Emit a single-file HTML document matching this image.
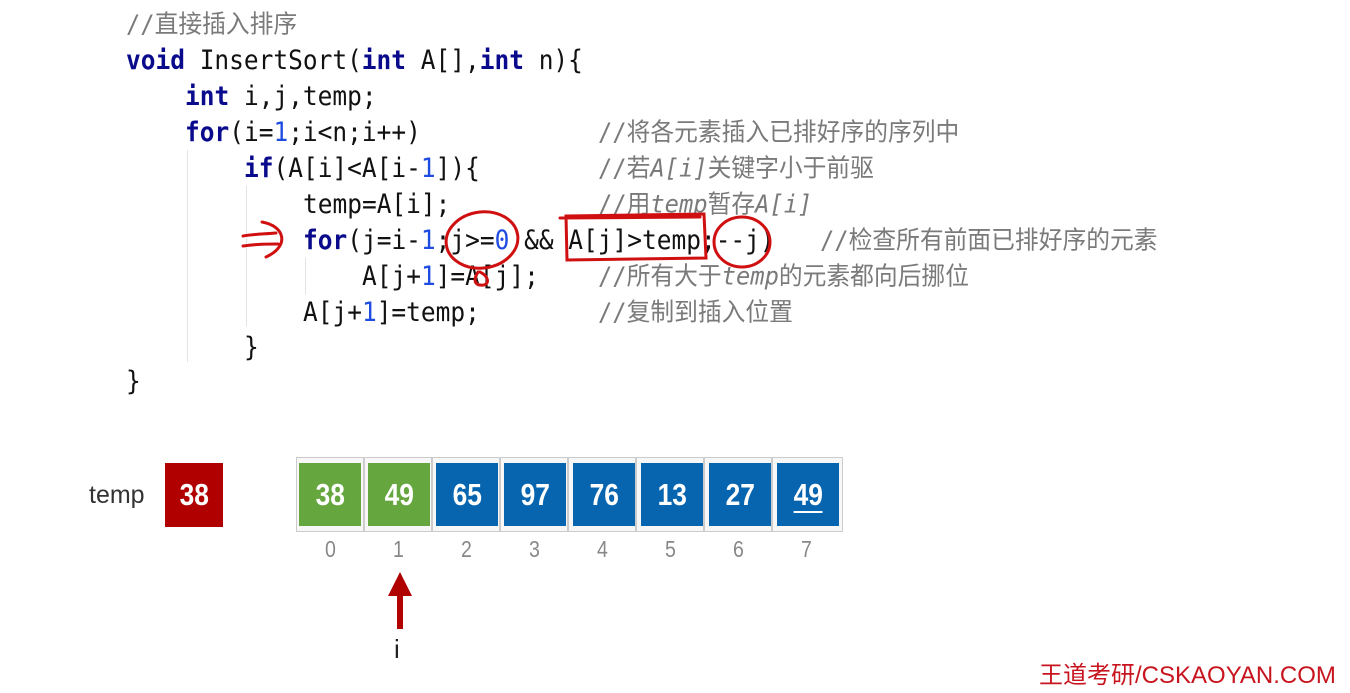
<!DOCTYPE html>
<html><head><meta charset="utf-8"><style>
body{margin:0;width:1350px;height:693px;background:#fff;position:relative;overflow:hidden;font-family:"DejaVu Sans Mono","Noto Sans CJK SC",monospace}
.l{position:absolute;font-size:24px;line-height:36px;white-space:pre;color:#111;transform:scale(1.02,1.1);transform-origin:left center}
.k{color:#0a0a8c;font-weight:bold}
.n{color:#1f4ce0}
.c{color:#7a7a7a;font-size:24px;transform:scale(0.99,1.05)}
.c i{font-style:italic}
.g{position:absolute;width:1px;background:#e4e4e4}
.cell{position:absolute;top:457px;width:68px;height:75px;border:1px solid #ccc;box-sizing:border-box;background:#f7f7f7}
.box{position:absolute;top:463px;width:62px;height:63px;color:#fff;font:bold 31px "Liberation Sans",sans-serif;text-align:center;line-height:63px}
.box span{display:inline-block;transform:scaleX(0.85)}
.idx{position:absolute;top:536px;width:68px;text-align:center;font:23px "Liberation Sans",sans-serif;color:#888}
.idx span{display:inline-block;transform:scaleX(0.85)}
</style></head><body>
<div class="g" style="left:187px;top:150px;height:212px"></div>
<div class="g" style="left:246px;top:186px;height:140px"></div>
<div class="g" style="left:305px;top:258px;height:36px"></div>

<div class="l c" style="left:126px;top:6px">//直接插入排序</div>
<div class="l" style="left:126px;top:42px"><span class="k">void</span> InsertSort(<span class="k">int</span> A[],<span class="k">int</span> n){</div>
<div class="l" style="left:185px;top:78px"><span class="k">int</span> i,j,temp;</div>
<div class="l" style="left:185px;top:114px"><span class="k">for</span>(i=<span class="n">1</span>;i&lt;n;i++)</div>
<div class="l" style="left:244px;top:150px"><span class="k">if</span>(A[i]&lt;A[i-<span class="n">1</span>]){</div>
<div class="l" style="left:303px;top:186px">temp=A[i];</div>
<div class="l" style="left:303px;top:222px"><span class="k">for</span>(j=i-<span class="n">1</span>;j&gt;=<span class="n">0</span> &amp;&amp; A[j]&gt;temp;--j)</div>
<div class="l" style="left:362px;top:258px">A[j+<span class="n">1</span>]=A[j];</div>
<div class="l" style="left:303px;top:294px">A[j+<span class="n">1</span>]=temp;</div>
<div class="l" style="left:244px;top:329px">}</div>
<div class="l" style="left:126px;top:363px">}</div>

<div class="l c" style="left:598px;top:114px">//将各元素插入已排好序的序列中</div>
<div class="l c" style="left:598px;top:150px">//若<i>A[i]</i>关键字小于前驱</div>
<div class="l c" style="left:598px;top:186px">//用<i>temp</i>暂存<i>A[i]</i></div>
<div class="l c" style="left:820px;top:222px">//检查所有前面已排好序的元素</div>
<div class="l c" style="left:598px;top:258px">//所有大于<i>temp</i>的元素都向后挪位</div>
<div class="l c" style="left:598px;top:294px">//复制到插入位置</div>

<svg style="position:absolute;left:0;top:0" width="1350" height="693" fill="none" stroke="#d01010" stroke-width="3" stroke-linecap="round">
<path d="M243 236 C255 234 265 234 276 233 M243 246 C258 244 266 244 278 244 M262 222 C285 226 290 246 266 257"/>
<ellipse cx="482" cy="240" rx="36" ry="28" transform="rotate(-8 482 240)"/>
<path d="M566 216 L704 214 L706 258 L567 260 Z M560 218 L700 217"/>
<ellipse cx="742" cy="242" rx="28" ry="25"/>
<path d="M478 272 C472 282 476 286 484 285 C490 283 488 276 480 272"/>
</svg>

<div style="position:absolute;left:89px;top:481px;font:25px 'Liberation Sans',sans-serif;color:#333">temp</div>
<div class="box" style="left:165px;background:#b00000;width:58px;height:64px"><span>38</span></div>

<div class="cell" style="left:296px"></div><div class="cell" style="left:364px"></div><div class="cell" style="left:432px"></div><div class="cell" style="left:500px"></div><div class="cell" style="left:568px"></div><div class="cell" style="left:636px"></div><div class="cell" style="left:704px"></div><div class="cell" style="left:772px;width:71px"></div>
<div class="box" style="left:299px;background:#66a63e"><span>38</span></div>
<div class="box" style="left:368px;background:#66a63e"><span>49</span></div>
<div class="box" style="left:436px;background:#0765b0"><span>65</span></div>
<div class="box" style="left:504px;background:#0765b0"><span>97</span></div>
<div class="box" style="left:573px;background:#0765b0"><span>76</span></div>
<div class="box" style="left:641px;background:#0765b0"><span>13</span></div>
<div class="box" style="left:709px;background:#0765b0"><span>27</span></div>
<div class="box" style="left:777px;background:#0765b0"><span style="border-bottom:2px solid #fff;line-height:32px">49</span></div>

<div class="idx" style="left:296px"><span>0</span></div><div class="idx" style="left:364px"><span>1</span></div><div class="idx" style="left:432px"><span>2</span></div><div class="idx" style="left:500px"><span>3</span></div><div class="idx" style="left:568px"><span>4</span></div><div class="idx" style="left:636px"><span>5</span></div><div class="idx" style="left:704px"><span>6</span></div><div class="idx" style="left:772px"><span>7</span></div>

<svg style="position:absolute;left:388px;top:572px" width="24" height="60"><polygon points="12,0 24,24 15,24 15,57 9,57 9,24 0,24" fill="#b00000"/></svg>
<div style="position:absolute;left:394px;top:634px;font:26px 'Liberation Sans',sans-serif;color:#222">i</div>

<div style="position:absolute;left:1039px;top:655px;font:24px 'Liberation Sans','Noto Sans CJK SC',sans-serif;color:#c8141e">王道考研/CSKAOYAN.COM</div>
</body></html>
